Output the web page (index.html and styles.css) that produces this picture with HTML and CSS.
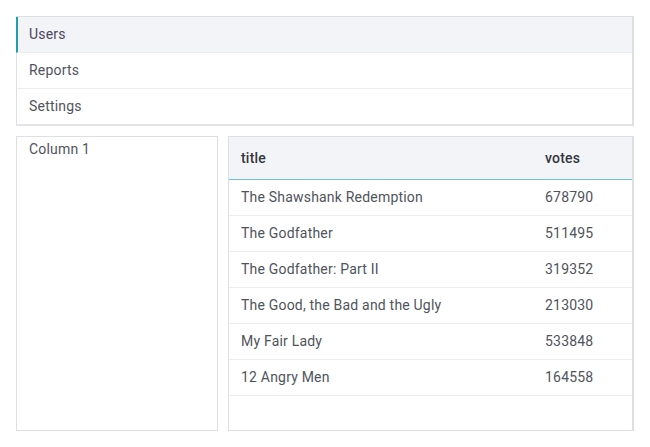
FILE: index.html
```html
<!DOCTYPE html>
<html>
<head>
<meta charset="utf-8">
<link rel="stylesheet" href="styles.css">
</head>
<body>
<div class="page">
  <nav class="menu">
    <div class="menu-item active">Users</div>
    <div class="menu-item">Reports</div>
    <div class="menu-item">Settings</div>
  </nav>
  <div class="panels">
    <div class="panel-left">Column 1</div>
    <div class="panel-right">
      <table class="grid">
        <thead>
          <tr><th class="c-title">title</th><th class="c-votes">votes</th></tr>
        </thead>
        <tbody>
          <tr><td>The Shawshank Redemption</td><td>678790</td></tr>
          <tr><td>The Godfather</td><td>511495</td></tr>
          <tr><td>The Godfather: Part II</td><td>319352</td></tr>
          <tr><td>The Good, the Bad and the Ugly</td><td>213030</td></tr>
          <tr><td>My Fair Lady</td><td>533848</td></tr>
          <tr><td>12 Angry Men</td><td>164558</td></tr>
        </tbody>
      </table>
    </div>
  </div>
</div>
</body>
</html>
```
FILE: styles.css
```css
html, body {
  margin: 0;
  padding: 0;
  background: #ffffff;
}
body {
  font-family: Roboto, "Liberation Sans", sans-serif;
  font-size: 14px;
  letter-spacing: 0.2px;
  color: #4f545c;
}
.page {
  padding: 16px 16px 0 16px;
  width: 618px;
}
.menu {
  border: 1px solid #dcdfe4;
  border-bottom-width: 2px;
  border-right-width: 2px;
  border-bottom-color: #e2e4e8;
  display: flex;
  flex-direction: column;
}
.menu-item {
  height: 35px;
  line-height: 35px;
  padding-left: 11px;
  border-bottom: 1px solid #ececef;
  border-left: 2px solid transparent;
  margin-left: -1px;
}
.menu-item:last-child {
  border-bottom: none;
}
.menu-item.active {
  background: #f3f4f8;
  border-left-color: #1a9fb3;
  color: #4a4660;
}
.panels {
  display: flex;
  gap: 10px;
  margin-top: 10px;
  height: 295px;
}
.panel-left {
  width: 188px;
  border: 1px solid #dcdfe4;
  padding: 3px 0 0 12px;
  line-height: 18px;
}
.panel-right {
  flex: 1;
  border: 1px solid #dcdfe4;
  border-right-width: 2px;
}
.grid {
  width: 100%;
  border-collapse: collapse;
}
.grid th {
  height: 41px;
  background: #f3f4f8;
  text-align: left;
  font-weight: 500;
  color: #33363d;
  padding: 0 12px 1px 12px;
  border-bottom: 1px solid #6cc0e0;
}
.grid th.c-title {
  width: 280px;
}
.grid td {
  height: 34px;
  padding: 0 12px 1px 12px;
  border-bottom: 1px solid #ececef;
}
```
